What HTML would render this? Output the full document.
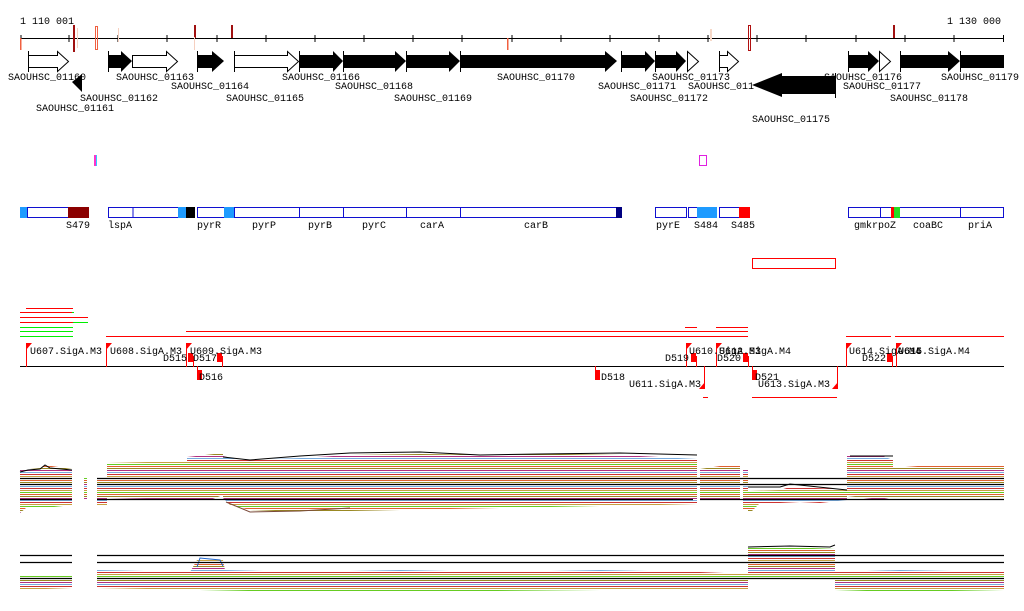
<!DOCTYPE html>
<html><head><meta charset="utf-8"><style>
html,body{margin:0;padding:0;background:#fff;width:1024px;height:611px;overflow:hidden}
svg{display:block}
text{font-family:"Liberation Mono","DejaVu Sans Mono",monospace;font-size:10px;fill:#000}
</style></head><body>
<svg width="1024" height="611" viewBox="0 0 1024 611" xmlns="http://www.w3.org/2000/svg">
<defs>
<linearGradient id="p" gradientUnits="userSpaceOnUse" x1="0" y1="0" x2="0" y2="14" spreadMethod="repeat">
<stop offset="0" stop-color="#c8a040"/><stop offset="0.0714" stop-color="#c8a040"/>
<stop offset="0.0714" stop-color="#fff"/><stop offset="0.1428" stop-color="#fff"/>
<stop offset="0.1428" stop-color="#66cc22"/><stop offset="0.2142" stop-color="#66cc22"/>
<stop offset="0.2142" stop-color="#fff"/><stop offset="0.2857" stop-color="#fff"/>
<stop offset="0.2857" stop-color="#e06030"/><stop offset="0.3571" stop-color="#e06030"/>
<stop offset="0.3571" stop-color="#fff"/><stop offset="0.4285" stop-color="#fff"/>
<stop offset="0.4285" stop-color="#998822"/><stop offset="0.5" stop-color="#998822"/>
<stop offset="0.5" stop-color="#fff"/><stop offset="0.5714" stop-color="#fff"/>
<stop offset="0.5714" stop-color="#b03080"/><stop offset="0.6428" stop-color="#b03080"/>
<stop offset="0.6428" stop-color="#fff"/><stop offset="0.7142" stop-color="#fff"/>
<stop offset="0.7142" stop-color="#77aadd"/><stop offset="0.7857" stop-color="#77aadd"/>
<stop offset="0.7857" stop-color="#fff"/><stop offset="0.8571" stop-color="#fff"/>
<stop offset="0.8571" stop-color="#cc3333"/><stop offset="0.9285" stop-color="#cc3333"/>
<stop offset="0.9285" stop-color="#fff"/><stop offset="1" stop-color="#fff"/>
</linearGradient>
</defs>

<!-- ruler -->
<text x="20" y="24">1 110 001</text>
<text x="947" y="24">1 130 000</text>
<line x1="20" y1="38.5" x2="1004" y2="38.5" stroke="#000"/>
<g stroke="#000">
<line x1="21" y1="35" x2="21" y2="42"/><line x1="69" y1="35" x2="69" y2="42"/><line x1="118" y1="35" x2="118" y2="42"/><line x1="167" y1="35" x2="167" y2="42"/><line x1="217" y1="35" x2="217" y2="42"/><line x1="266" y1="35" x2="266" y2="42"/><line x1="315" y1="35" x2="315" y2="42"/><line x1="364" y1="35" x2="364" y2="42"/><line x1="413" y1="35" x2="413" y2="42"/><line x1="462" y1="35" x2="462" y2="42"/><line x1="512" y1="35" x2="512" y2="42"/><line x1="561" y1="35" x2="561" y2="42"/><line x1="610" y1="35" x2="610" y2="42"/><line x1="659" y1="35" x2="659" y2="42"/><line x1="708" y1="35" x2="708" y2="42"/><line x1="757" y1="35" x2="757" y2="42"/><line x1="806" y1="35" x2="806" y2="42"/><line x1="856" y1="35" x2="856" y2="42"/><line x1="905" y1="35" x2="905" y2="42"/><line x1="954" y1="35" x2="954" y2="42"/><line x1="1003.5" y1="35" x2="1003.5" y2="42"/>
</g>
<rect x="73" y="25" width="2" height="27" fill="#a01010"/>
<rect x="77" y="28" width="1" height="20" fill="#f6d0c0"/>
<rect x="95.5" y="26.5" width="2" height="23" fill="none" stroke="#f06040"/>
<rect x="118" y="28" width="1" height="14" fill="#f6d0c0"/>
<rect x="194" y="25" width="2" height="13" fill="#a01010"/>
<rect x="194" y="37" width="1" height="13" fill="#f6d0c0"/>
<rect x="231" y="25" width="2" height="13" fill="#a01010"/>
<rect x="20" y="38" width="1.5" height="12" fill="#f06040"/>
<rect x="507" y="38" width="1.5" height="12" fill="#f06040"/>
<rect x="710" y="29" width="2" height="12" fill="#f6d8c8"/>
<rect x="748.5" y="25.5" width="2" height="25" fill="none" stroke="#b01010"/>
<rect x="893" y="25" width="2" height="13" fill="#a01010"/>

<!-- genes -->
<g stroke="#000" stroke-width="1">
<line x1="28.5" y1="51" x2="28.5" y2="72"/><line x1="108.5" y1="51" x2="108.5" y2="72"/><line x1="197.5" y1="51" x2="197.5" y2="72"/><line x1="234.5" y1="51" x2="234.5" y2="72"/><line x1="299.5" y1="51" x2="299.5" y2="72"/><line x1="343.5" y1="51" x2="343.5" y2="72"/><line x1="406.5" y1="51" x2="406.5" y2="72"/><line x1="460.5" y1="51" x2="460.5" y2="72"/><line x1="621.5" y1="51" x2="621.5" y2="72"/><line x1="655.5" y1="51" x2="655.5" y2="72"/><line x1="719.5" y1="51" x2="719.5" y2="72"/><line x1="848.5" y1="51" x2="848.5" y2="72"/><line x1="900.5" y1="51" x2="900.5" y2="72"/><line x1="960.5" y1="51" x2="960.5" y2="72"/>
<line x1="835.5" y1="73" x2="835.5" y2="98"/>
</g>
<g stroke="#000" fill="#fff">
<polygon points="28.5,55.5 57.5,55.5 57.5,51.5 68.5,61.5 57.5,71.5 57.5,67.5 28.5,67.5"/>
<polygon points="132.5,55.5 166.5,55.5 166.5,51.5 177.5,61.5 166.5,71.5 166.5,67.5 132.5,67.5"/>
<polygon points="234.5,55.5 287.5,55.5 287.5,51.5 298.5,61.5 287.5,71.5 287.5,67.5 234.5,67.5"/>
<polygon points="687.5,51.5 698.5,61.5 687.5,71.5"/>
<polygon points="719.5,55.5 727.5,55.5 727.5,51.5 738.5,61.5 727.5,71.5 727.5,67.5 719.5,67.5"/>
<polygon points="879.5,51.5 890.5,61.5 879.5,71.5"/>
</g>
<g fill="#000">
<polygon points="108,55 121,55 121,51 132,61 121,72 121,68 108,68"/>
<polygon points="197,55 212,55 212,51 224,61 212,72 212,68 197,68"/>
<polygon points="299,55 333,55 333,51 343,61 333,72 333,68 299,68"/>
<polygon points="343,55 395,55 395,51 406,61 395,72 395,68 343,68"/>
<polygon points="406,55 449,55 449,51 460,61 449,72 449,68 406,68"/>
<polygon points="460,55 605,55 605,51 617,61 605,72 605,68 460,68"/>
<polygon points="621,55 645,55 645,51 655,61 645,72 645,68 621,68"/>
<polygon points="655,55 676,55 676,51 686,61 676,72 676,68 655,68"/>
<polygon points="848,55 868,55 868,51 879,61 868,72 868,68 848,68"/>
<polygon points="900,55 948,55 948,51 960,61 948,72 948,68 900,68"/>
<rect x="960" y="55" width="44" height="13"/>
<polygon points="72,82 82,74 82,92"/>
<polygon points="752,85 782,73 782,76 835,76 835,94 782,94 782,97"/>
</g>
<text x="8" y="80">SAOUHSC_01160</text>
<text x="116" y="80">SAOUHSC_01163</text>
<text x="282" y="80">SAOUHSC_01166</text>
<text x="497" y="80">SAOUHSC_01170</text>
<text x="652" y="80">SAOUHSC_01173</text>
<text x="824" y="80">SAOUHSC_01176</text>
<text x="941" y="80">SAOUHSC_01179</text>
<text x="171" y="89">SAOUHSC_01164</text>
<text x="335" y="89">SAOUHSC_01168</text>
<text x="598" y="89">SAOUHSC_01171</text>
<text x="688" y="89">SAOUHSC_011</text>
<text x="843" y="89">SAOUHSC_01177</text>
<text x="80" y="101">SAOUHSC_01162</text>
<text x="226" y="101">SAOUHSC_01165</text>
<text x="394" y="101">SAOUHSC_01169</text>
<text x="630" y="101">SAOUHSC_01172</text>
<text x="890" y="101">SAOUHSC_01178</text>
<text x="36" y="111">SAOUHSC_01161</text>
<text x="752" y="122">SAOUHSC_01175</text>

<rect x="94" y="155" width="2" height="11" fill="#ff33cc"/><rect x="96" y="155" width="1" height="11" fill="#33ccff"/>
<rect x="699.5" y="155.5" width="7" height="10" fill="none" stroke="#e020e0"/>

<!-- features -->
<g fill="#fff" stroke="#1010d0">
<rect x="27.5" y="207.5" width="61" height="10"/>
<rect x="108.5" y="207.5" width="70" height="10"/><line x1="133" y1="208" x2="133" y2="217"/>
<rect x="197.5" y="207.5" width="27" height="10"/>
<rect x="234.5" y="207.5" width="382" height="10"/>
<line x1="299.5" y1="208" x2="299.5" y2="217"/><line x1="343.5" y1="208" x2="343.5" y2="217"/><line x1="406.5" y1="208" x2="406.5" y2="217"/><line x1="460.5" y1="208" x2="460.5" y2="217"/>
<rect x="655.5" y="207.5" width="31" height="10"/>
<rect x="688.5" y="207.5" width="9" height="10"/>
<rect x="719.5" y="207.5" width="20" height="10"/>
<rect x="848.5" y="207.5" width="155" height="10"/>
<line x1="880.5" y1="208" x2="880.5" y2="217"/><line x1="960.5" y1="208" x2="960.5" y2="217"/>
</g>
<rect x="20" y="207" width="7" height="11" fill="#1e9bff"/>
<rect x="68" y="207" width="21" height="11" fill="#8b0000"/>
<rect x="178" y="207" width="8" height="11" fill="#1e9bff"/>
<rect x="186" y="207" width="9" height="11" fill="#000"/>
<rect x="224" y="207" width="10" height="11" fill="#1e9bff"/>
<rect x="616" y="207" width="6" height="11" fill="#000080"/>
<rect x="697" y="207" width="20" height="11" fill="#1e9bff"/>
<rect x="739" y="207" width="11" height="11" fill="#ff0000"/>
<rect x="891" y="207" width="3" height="11" fill="#ff0000"/>
<rect x="894" y="207" width="6" height="11" fill="#22dd22"/>
<text x="66" y="228">S479</text><text x="108" y="228">lspA</text><text x="197" y="228">pyrR</text><text x="252" y="228">pyrP</text><text x="308" y="228">pyrB</text><text x="362" y="228">pyrC</text><text x="420" y="228">carA</text><text x="524" y="228">carB</text><text x="656" y="228">pyrE</text><text x="694" y="228">S484</text><text x="731" y="228">S485</text><text x="854" y="228">gmkrpoZ</text><text x="913" y="228">coaBC</text><text x="968" y="228">priA</text>

<rect x="752.5" y="258.5" width="83" height="10" fill="none" stroke="#f00"/>

<!-- red/green lines -->
<g stroke-width="1">
<line x1="26" y1="308.5" x2="73" y2="308.5" stroke="#f00"/>
<line x1="20" y1="312.5" x2="72" y2="312.5" stroke="#f00"/><line x1="72" y1="312.5" x2="74" y2="312.5" stroke="#0e0"/>
<line x1="20" y1="317.5" x2="88" y2="317.5" stroke="#f00"/>
<line x1="20" y1="322.5" x2="73" y2="322.5" stroke="#f00"/><line x1="73" y1="322.5" x2="88" y2="322.5" stroke="#0e0"/>
<line x1="20" y1="327.5" x2="73" y2="327.5" stroke="#0e0"/>
<line x1="20" y1="331.5" x2="73" y2="331.5" stroke="#0e0"/>
<line x1="20" y1="336.5" x2="73" y2="336.5" stroke="#0e0"/>
<line x1="106" y1="336.5" x2="748" y2="336.5" stroke="#f00"/>
<line x1="186" y1="331.5" x2="748" y2="331.5" stroke="#f00"/>
<line x1="685" y1="327.5" x2="697" y2="327.5" stroke="#f00"/>
<line x1="716" y1="327.5" x2="748" y2="327.5" stroke="#f00"/>
<line x1="846" y1="336.5" x2="891" y2="336.5" stroke="#f00"/>
<line x1="895" y1="336.5" x2="1004" y2="336.5" stroke="#f00"/>
<line x1="703" y1="397.5" x2="708" y2="397.5" stroke="#f00"/>
<line x1="752" y1="397.5" x2="837" y2="397.5" stroke="#f00"/>
</g>
<line x1="20" y1="366.5" x2="1004" y2="366.5" stroke="#000"/>
<g fill="#f00">
<rect x="26" y="343" width="1" height="24"/><polygon points="26,343 32,343 26,350"/>
<rect x="106" y="343" width="1" height="24"/><polygon points="106,343 112,343 106,350"/>
<rect x="186" y="343" width="1" height="24"/><polygon points="186,343 192,343 186,350"/>
<rect x="686" y="343" width="1" height="24"/><polygon points="686,343 692,343 686,350"/>
<rect x="716" y="343" width="1" height="24"/><polygon points="716,343 722,343 716,350"/>
<rect x="846" y="343" width="1" height="24"/><polygon points="846,343 852,343 846,350"/>
<rect x="896" y="343" width="1" height="24"/><polygon points="896,343 902,343 896,350"/>
<rect x="704" y="366" width="1" height="23"/><polygon points="705,389 699,389 705,382"/>
<rect x="837" y="366" width="1" height="23"/><polygon points="838,389 832,389 838,382"/>
<rect x="188" y="353" width="5" height="9"/><rect x="193" y="356" width="1" height="11"/>
<rect x="217" y="353" width="5" height="9"/><rect x="222" y="356" width="1" height="11"/>
<rect x="691" y="353" width="5" height="9"/><rect x="696" y="356" width="1" height="11"/>
<rect x="743" y="353" width="5" height="9"/><rect x="748" y="356" width="1" height="11"/>
<rect x="887" y="353" width="5" height="9"/><rect x="892" y="356" width="1" height="11"/>
<rect x="197" y="370" width="5" height="10"/><rect x="197" y="366" width="1" height="5"/>
<rect x="595" y="370" width="5" height="10"/><rect x="595" y="366" width="1" height="5"/>
<rect x="752" y="370" width="5" height="10"/><rect x="752" y="366" width="1" height="5"/>
</g>
<text x="30" y="354">U607.SigA.M3</text>
<text x="110" y="354">U608.SigA.M3</text>
<text x="190" y="354">U609.SigA.M3</text>
<text x="689" y="354">U610.SigA.M3</text>
<text x="719" y="354">U612.SigA.M4</text>
<text x="849" y="354">U614.SigA.M4</text>
<text x="898" y="354">U615.SigA.M4</text>
<text x="898" y="354">U616</text>
<text x="163" y="361">D515</text><text x="193" y="361">D517</text>
<text x="665" y="361">D519</text><text x="717" y="361">D520</text><text x="862" y="361">D522</text>
<text x="199" y="380">D516</text><text x="601" y="380">D518</text><text x="755" y="380">D521</text>
<text x="629" y="387">U611.SigA.M3</text><text x="758" y="387">U613.SigA.M3</text>

<!-- profile 1 -->
<g fill="url(#p)">
<polygon points="20,470 40,468 45,465 72,469 72,505 45,508 26,508 20,513"/>
<rect x="84" y="478" width="3" height="22"/>
<polygon points="97,478 107,478 107,463 187,461 187,500 107,498 107,506 97,505"/>
<polygon points="187,457 223,453 223,495 210,500 187,500"/>
<polygon points="223,456 240,460 300,458 350,455 420,454 500,455 560,454 620,455 697,459 697,504 660,505 600,506 500,508 400,510 300,512 250,510 230,505 223,498"/>
<polygon points="700,469 720,466 740,466 740,500 700,500"/>
<polygon points="743,470 748,470 748,510 743,510"/>
<polygon points="748,491 780,490 790,487 840,489 847,490 847,500 820,503 800,502 780,503 760,503 752,511 748,512"/>
<polygon points="847,455 880,455 893,460 893,497 880,500 847,496"/>
<polygon points="893,468 930,465 1004,466 1004,497 893,497"/>
</g>
<polyline points="20,472 28,470 40,469 45,465 50,468 72,470" fill="none" stroke="#000"/>
<polyline points="223,457 250,460 300,456 350,453 420,452 480,455 540,454 620,453 697,455" fill="none" stroke="#000"/>
<polyline points="850,456 893,456" fill="none" stroke="#000"/>
<polyline points="748,487 780,487 790,484 847,490" fill="none" stroke="#000"/>
<polyline points="226,502 250,512 300,511 350,508" fill="none" stroke="#7a4a3a"/>
<g stroke="#000" stroke-width="1.3">
<line x1="20" y1="478.5" x2="72" y2="478.5"/><line x1="97" y1="478.5" x2="1004" y2="478.5"/>
<line x1="20" y1="484.5" x2="72" y2="484.5"/><line x1="97" y1="484.5" x2="1004" y2="484.5"/>
<line x1="20" y1="499.5" x2="72" y2="499.5"/><line x1="97" y1="499.5" x2="693" y2="499.5"/><line x1="700" y1="499.5" x2="1004" y2="499.5"/>
</g>

<!-- profile 2 -->
<g fill="url(#p)">
<polygon points="20,575 72,575 72,588 20,590"/>
<polygon points="97,570 190,572 197,560 223,560 225,570 300,572 400,570 500,572 600,570 700,572 748,574 748,590 600,590 400,592 300,592 200,590 97,588"/>
<polygon points="748,548 790,547 835,549 835,578 748,578"/>
<polygon points="835,572 900,570 1004,572 1004,590 900,592 835,590"/>
</g>
<polyline points="197,567 200,558 220,560 223,566" fill="none" stroke="#2266cc"/>
<polyline points="748,547 790,546 830,547 835,545" fill="none" stroke="#000"/>
<g stroke="#000" stroke-width="1.3">
<line x1="20" y1="555.5" x2="72" y2="555.5"/><line x1="97" y1="555.5" x2="1004" y2="555.5"/>
<line x1="20" y1="562.5" x2="72" y2="562.5"/><line x1="97" y1="562.5" x2="1004" y2="562.5"/>
<line x1="20" y1="578.5" x2="72" y2="578.5"/><line x1="97" y1="578.5" x2="1004" y2="578.5"/>
</g>
</svg>
</body></html>
